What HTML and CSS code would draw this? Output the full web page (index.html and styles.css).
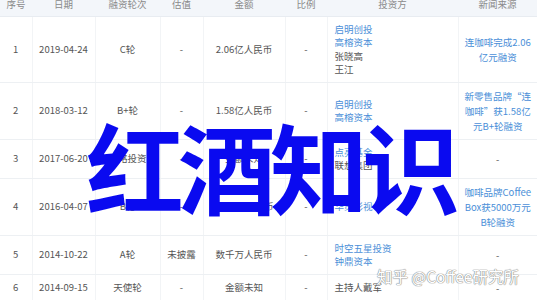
FILE: index.html
```html
<!DOCTYPE html>
<html lang="zh">
<head>
<meta charset="utf-8">
<link rel="stylesheet" href="styles.css">
</head>
<body>
<div class="page">
  <table class="grid">
    <colgroup>
      <col class="c1"><col class="c2"><col class="c3"><col class="c4"><col class="c5"><col class="c6"><col class="c7"><col class="c8">
    </colgroup>
    <thead>
      <tr><th>序号</th><th>日期</th><th>融资轮次</th><th>估值</th><th>金额</th><th>比例</th><th>投资方</th><th>新闻来源</th></tr>
    </thead>
    <tbody>
      <tr>
        <td>1</td><td>2019-04-24</td><td>C轮</td><td>-</td><td>2.06亿人民币</td><td>-</td>
        <td class="inv"><a>启明创投</a><a>高榕资本</a><span>张晓高</span><span>王江</span></td>
        <td class="news"><a>连咖啡完成2.06亿元融资</a></td>
      </tr>
      <tr>
        <td>2</td><td>2018-03-12</td><td>B+轮</td><td>-</td><td>1.58亿人民币</td><td>-</td>
        <td class="inv"><a>启明创投</a><a>高榕资本</a></td>
        <td class="news"><a>新零售品牌“连咖啡”获1.58亿元B+轮融资</a></td>
      </tr>
      <tr>
        <td>3</td><td>2017-06-20</td><td>战略投资</td><td>-</td><td>金额未知</td><td>-</td>
        <td class="inv"><a>点亮基金</a><span>联想集团</span></td>
        <td class="news">-</td>
      </tr>
      <tr>
        <td>4</td><td>2016-04-07</td><td>B轮</td><td>-</td><td>5000万人民币</td><td>-</td>
        <td class="inv"><a>华策影视</a></td>
        <td class="news"><a>咖啡品牌CoffeeBox获5000万元B轮融资</a></td>
      </tr>
      <tr>
        <td>5</td><td>2014-10-22</td><td>A轮</td><td>未披露</td><td>数千万人民币</td><td>-</td>
        <td class="inv"><a>时空五星投资</a><a>钟鼎资本</a></td>
        <td class="news">-</td>
      </tr>
      <tr>
        <td>6</td><td>2014-09-15</td><td>天使轮</td><td>-</td><td>金额未知</td><td>-</td>
        <td class="inv"><span>主持人戴军</span></td>
        <td class="news">-</td>
      </tr>
    </tbody>
  </table>
  <div class="title">红酒知识</div>
  <div class="mark">知乎 @Coffee研究所</div>
</div>
</body>
</html>
```
FILE: styles.css
```css
html, body {
  margin: 0;
  padding: 0;
  background: #fff;
  overflow: hidden;
}
.page {
  position: relative;
  width: 537px;
  height: 300px;
  overflow: hidden;
  font-family: "Noto Sans CJK SC", "Noto Sans", sans-serif;
}
.grid {
  width: 537px;
  margin-top: -6px;
  border-collapse: collapse;
  table-layout: fixed;
  font-size: 9.5px;
  line-height: 13.5px;
  color: #555;
}
.c1 { width: 32px; }
.c2 { width: 63px; }
.c3 { width: 65px; }
.c4 { width: 43px; }
.c5 { width: 82px; }
.c6 { width: 42px; }
.c7 { width: 131px; }
.c8 { width: 79px; }
.grid th {
  height: 22px;
  padding: 0;
  background: #f3f6fa;
  color: #8a8a8a;
  font-weight: 400;
  text-align: center;
  border-bottom: 1px solid #e8ecf1;
}
.grid td {
  padding: 5.5px 4px;
  text-align: center;
  vertical-align: middle;
  border-bottom: 1px solid #edf0f3;
  border-left: 1px solid #f2f4f6;
  white-space: nowrap;
}
.grid td:first-child { border-left: none; }
.grid td.inv {
  text-align: left;
  padding-left: 7px;
}
.grid td.inv a, .grid td.inv span {
  display: block;
}
.grid td.news {
  white-space: normal;
  padding: 5.5px 6px;
  line-height: 15px;
  word-break: break-all;
}
.grid a {
  color: #4b8fd8;
  text-decoration: none;
}
.title {
  position: absolute;
  left: 86px;
  top: 106px;
  font-size: 98px;
  line-height: 1.2;
  font-weight: 700;
  color: #0a0af0;
  letter-spacing: -6px;
  white-space: nowrap;
}
.mark {
  position: absolute;
  left: 377px;
  top: 266px;
  font-size: 15.5px;
  line-height: 20px;
  color: #fff;
  white-space: nowrap;
  text-shadow: 0 0 1px #888, 0 0 1px #888, 0 0 1px #999;
}
```
